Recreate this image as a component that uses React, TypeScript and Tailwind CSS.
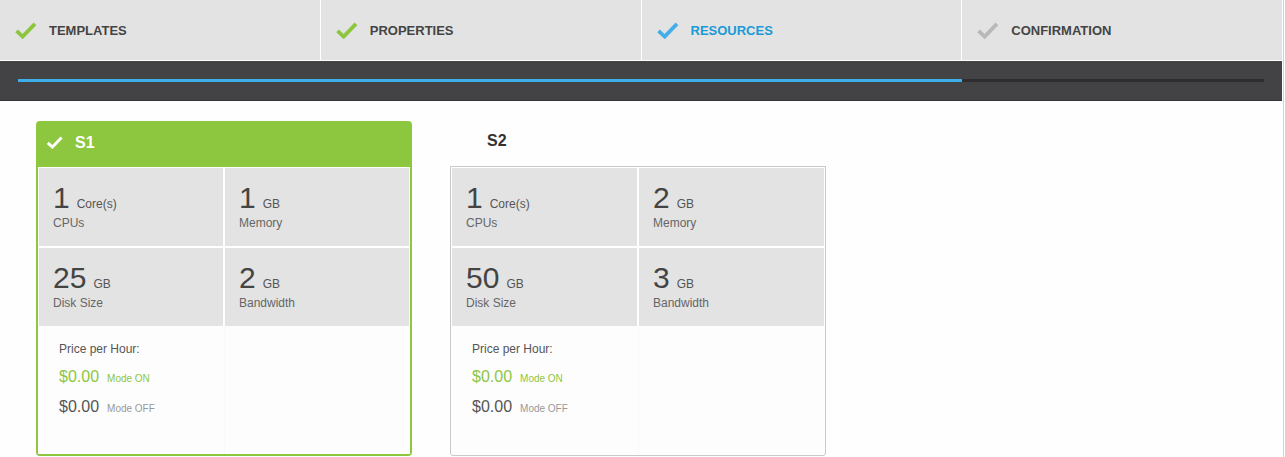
import React from "react";

const Check = ({ className, w, h }: { className: string; w: number; h: number }) => (
  <svg width={w} height={h} viewBox="0 0 24 18" className={className} fill="none">
    <path d="M2.5 9.5 L9 15.5 L22 2" stroke="currentColor" strokeWidth="4" strokeLinejoin="miter" />
  </svg>
);

const steps = [
  { label: "Templates", check: "text-[#8cc63f]", text: "text-[#444]" },
  { label: "Properties", check: "text-[#8cc63f]", text: "text-[#444]" },
  { label: "Resources", check: "text-[#45aee8]", text: "text-[#1a9ad6]" },
  { label: "Confirmation", check: "text-[#b8b8b8]", text: "text-[#444]" },
];

type Spec = { value: string; unit: string; label: string };

const plans: { name: string; selected: boolean; specs: Spec[] }[] = [
  {
    name: "S1",
    selected: true,
    specs: [
      { value: "1", unit: "Core(s)", label: "CPUs" },
      { value: "1", unit: "GB", label: "Memory" },
      { value: "25", unit: "GB", label: "Disk Size" },
      { value: "2", unit: "GB", label: "Bandwidth" },
    ],
  },
  {
    name: "S2",
    selected: false,
    specs: [
      { value: "1", unit: "Core(s)", label: "CPUs" },
      { value: "2", unit: "GB", label: "Memory" },
      { value: "50", unit: "GB", label: "Disk Size" },
      { value: "3", unit: "GB", label: "Bandwidth" },
    ],
  },
];

const PlanCard = ({ plan }: { plan: (typeof plans)[number] }) => {
  const sel = plan.selected;
  return (
    <div
      className={
        sel
          ? "w-[376px] h-[335px] border-2 border-[#8dc63f] rounded-[4px] bg-[#8dc63f] flex flex-col"
          : "w-[376px] h-[335px] flex flex-col"
      }
    >
      {/* header */}
      <div className="h-[44px] flex items-center pl-[8px] pb-[5px] gap-[12px]">
        <Check className={sel ? "text-white" : "text-transparent"} w={17} h={13} />
        <span className={sel ? "text-white font-bold text-[16px]" : "text-[#333] font-bold text-[16px]"}>
          {plan.name}
        </span>
      </div>
      {/* body */}
      <div
        className={
          sel
            ? "flex-1 bg-white p-px flex flex-col"
            : "flex-1 bg-white p-px flex flex-col border border-[#c8c8c8] rounded-b-[3px] mt-px"
        }
      >
        <div className="grid grid-cols-2 gap-[2px]">
          {plan.specs.map((s) => (
            <div key={s.label} className="bg-[#e3e3e3] h-[78px] pl-[14px] pt-[15px]">
              <div className="flex items-baseline gap-[7px] leading-none">
                <span className="text-[30px] text-[#444]">{s.value}</span>
                <span className="text-[12px] text-[#555]">{s.unit}</span>
              </div>
              <div className="text-[12px] text-[#666] mt-[1px]">{s.label}</div>
            </div>
          ))}
        </div>
        <div className="flex-1 grid grid-cols-2 gap-px bg-[#f8f8f8]">
          <div className="bg-[#fdfdfd] pl-[20px] pt-[14px]">
            <div className="text-[12px] text-[#555]">Price per Hour:</div>
            <div className="flex items-baseline gap-[8px] mt-[7px]">
              <span className="text-[16px] text-[#8dc63f]">$0.00</span>
              <span className="text-[10px] text-[#8dc63f]">Mode ON</span>
            </div>
            <div className="flex items-baseline gap-[8px] mt-[6px]">
              <span className="text-[16px] text-[#555]">$0.00</span>
              <span className="text-[10px] text-[#999]">Mode OFF</span>
            </div>
          </div>
          <div className="bg-[#fdfdfd]" />
        </div>
      </div>
    </div>
  );
};

export default function App() {
  return (
    <div
      className="w-[1284px] h-[457px] bg-[#fefefe] border-r border-[#d4d4d4] overflow-hidden"
      style={{ fontFamily: '"Liberation Sans", Arial, sans-serif' }}
    >
      {/* steps */}
      <div className="mr-px grid grid-cols-4 gap-px bg-white h-[60px]">
        {steps.map((s) => (
          <div key={s.label} className="bg-[#e3e3e3] flex items-center pl-[13px] pt-px gap-[11px]">
            <Check className={s.check} w={25} h={17} />
            <span className={`text-[13px] font-bold uppercase ${s.text}`}>{s.label}</span>
          </div>
        ))}
      </div>
      {/* progress */}
      <div className="mr-px mt-px h-[40px] bg-[#434345] border-b border-[#333] flex items-center px-[18px]">
        <div className="flex-1 h-[3px] bg-[#2e2e2f] flex">
          <div className="w-[944px] bg-[#3daee9]" />
        </div>
      </div>
      {/* plans */}
      <div className="flex gap-[38px] pl-[36px] pt-[20px]">
        {plans.map((p) => (
          <PlanCard key={p.name} plan={p} />
        ))}
      </div>
    </div>
  );
}
